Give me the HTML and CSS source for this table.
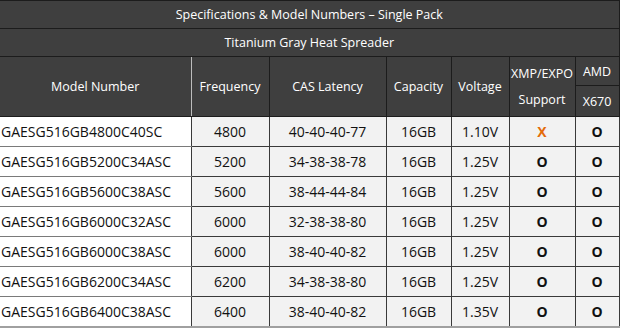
FILE: index.html
```html
<!DOCTYPE html>
<html>
<head>
<meta charset="utf-8">
<link rel="stylesheet" href="styles.css">
</head>
<body>
<table class="spec">
  <colgroup>
    <col class="c-model"><col class="c-freq"><col class="c-cas"><col class="c-cap"><col class="c-volt"><col class="c-xmp"><col class="c-amd">
  </colgroup>
  <thead>
    <tr class="title"><th colspan="7">Specifications &amp; Model Numbers – Single Pack</th></tr>
    <tr class="title"><th colspan="7">Titanium Gray Heat Spreader</th></tr>
    <tr class="head-a">
      <th rowspan="2" class="h-model">Model Number</th>
      <th rowspan="2">Frequency</th>
      <th rowspan="2">CAS Latency</th>
      <th rowspan="2">Capacity</th>
      <th rowspan="2">Voltage</th>
      <th rowspan="2" class="h-xmp">XMP/EXPO<br>Support</th>
      <th class="h-amd">AMD</th>
    </tr>
    <tr class="head-b"><th class="h-amd">X670</th></tr>
  </thead>
  <tbody>
    <tr><td class="model">GAESG516GB4800C40SC</td><td>4800</td><td>40-40-40-77</td><td>16GB</td><td>1.10V</td><td class="mark no">X</td><td class="mark">O</td></tr>
    <tr><td class="model">GAESG516GB5200C34ASC</td><td>5200</td><td>34-38-38-78</td><td>16GB</td><td>1.25V</td><td class="mark">O</td><td class="mark">O</td></tr>
    <tr><td class="model">GAESG516GB5600C38ASC</td><td>5600</td><td>38-44-44-84</td><td>16GB</td><td>1.25V</td><td class="mark">O</td><td class="mark">O</td></tr>
    <tr><td class="model">GAESG516GB6000C32ASC</td><td>6000</td><td>32-38-38-80</td><td>16GB</td><td>1.25V</td><td class="mark">O</td><td class="mark">O</td></tr>
    <tr><td class="model">GAESG516GB6000C38ASC</td><td>6000</td><td>38-40-40-82</td><td>16GB</td><td>1.25V</td><td class="mark">O</td><td class="mark">O</td></tr>
    <tr><td class="model">GAESG516GB6200C34ASC</td><td>6200</td><td>34-38-38-80</td><td>16GB</td><td>1.25V</td><td class="mark">O</td><td class="mark">O</td></tr>
    <tr><td class="model">GAESG516GB6400C38ASC</td><td>6400</td><td>38-40-40-82</td><td>16GB</td><td>1.35V</td><td class="mark">O</td><td class="mark">O</td></tr>
  </tbody>
</table>
</body>
</html>
```
FILE: styles.css
```css
html, body {
  margin: 0;
  padding: 0;
  background: #ffffff;
}
.spec {
  border-collapse: collapse;
  table-layout: fixed;
  width: 619px;
  font-family: "Open Sans", "Liberation Sans", sans-serif;
}
.c-model { width: 191px; }
.c-freq { width: 78px; }
.c-cas { width: 117px; }
.c-cap { width: 65px; }
.c-volt { width: 58px; }
.c-xmp { width: 66px; }
.c-amd { width: 44px; }

.spec th {
  background: #3f3f3f;
  color: #ffffff;
  font-weight: normal;
  font-size: 12.5px;
  padding: 0;
  border: 1px solid #1c1c1c;
  text-align: center;
}
.spec .title th {
  height: 27px;
  border-left: none;
}
.spec .head-a th {
  height: 28px;
}
.spec .head-b th {
  height: 30px;
}
.spec .h-model {
  border-left: none;
  border-right: 1px solid #bdbdbd;
}
.spec .h-xmp {
  line-height: 26px;
}
.spec td {
  height: 29px;
  padding: 0;
  border: 1px solid #3a3a3a;
  background: #f2f2f2;
  color: #111111;
  font-size: 14px;
  text-align: center;
}
.spec td.model {
  background: #ffffff;
  text-align: left;
  padding-left: 1px;
  border-left: none;
  border-top-color: #7a7a7a;
  border-bottom-color: #7a7a7a;
}
.spec td.mark {
  font-weight: bold;
}
.spec td.no {
  color: #e46c0a;
}
.spec tbody tr:last-child td {
  border-bottom: 2px solid #a0a0a0;
}
```
